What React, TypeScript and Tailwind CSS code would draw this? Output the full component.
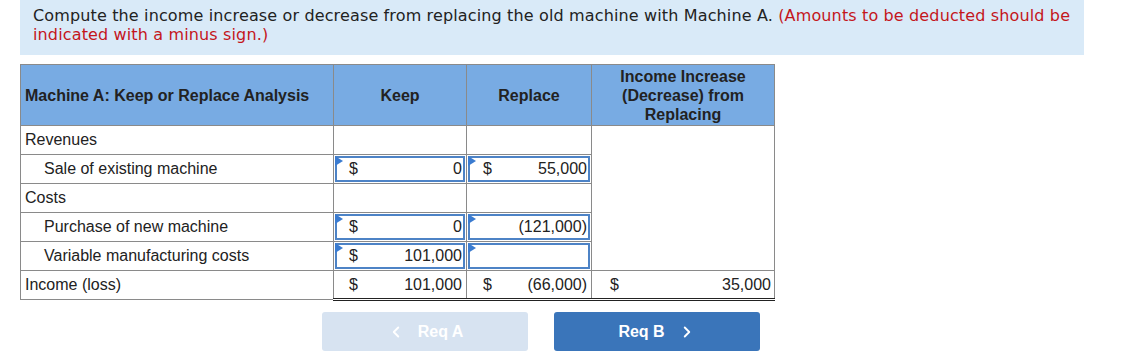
import { ChevronLeft, ChevronRight } from "lucide-react";

type Money = { dollar?: boolean; value?: string; input?: boolean };

const rows: {
  label: string;
  indent?: boolean;
  keep?: Money;
  replace?: Money;
}[] = [
  { label: "Revenues" },
  {
    label: "Sale of existing machine",
    indent: true,
    keep: { dollar: true, value: "0", input: true },
    replace: { dollar: true, value: "55,000", input: true },
  },
  { label: "Costs" },
  {
    label: "Purchase of new machine",
    indent: true,
    keep: { dollar: true, value: "0", input: true },
    replace: { value: "(121,000)", input: true },
  },
  {
    label: "Variable manufacturing costs",
    indent: true,
    keep: { dollar: true, value: "101,000", input: true },
    replace: { value: "", input: true },
  },
];

function Flag() {
  return (
    <span className="absolute left-[1px] top-[1px] h-0 w-0 border-t-[5px] border-b-[5px] border-l-[8px] border-t-transparent border-b-transparent border-l-[#3a7bd0]" />
  );
}

function MoneyCell({ m, pad }: { m?: Money; pad: string }) {
  if (!m) return <td className="border border-[#8a8a8a] p-0" />;
  return (
    <td className="relative border border-[#8a8a8a] p-0">
      {m.input && (
        <div className="pointer-events-none absolute inset-[1px] border-2 border-[#4d83c6]" />
      )}
      {m.input && <Flag />}
      <div className={`flex items-center justify-between pr-[4px] ${pad}`}>
        <span>{m.dollar ? "$" : ""}</span>
        <span>{m.value}</span>
      </div>
    </td>
  );
}

// totals row: double rule under the amount columns
const totalCell = "border border-[#8a8a8a] border-b-[3px] border-b-[#222] border-double p-0";

export default function App() {
  return (
    <div className="h-[359px] w-[1132px] bg-white">
      <div className="ml-[20px] h-[55px] w-[1064px] bg-[#d9eaf8] pl-[13px] pt-[6px] font-['DejaVu_Sans',Verdana,sans-serif] text-[16px] leading-[19px] tracking-[0.14px] text-[#222]">
        Compute the income increase or decrease from replacing the old machine with Machine A.{" "}
        <span className="text-[#c4161c]">(Amounts to be deducted should be indicated with a minus sign.)</span>
      </div>

      <table className="ml-[20px] mt-[9px] w-[754px] table-fixed border-collapse font-['Liberation_Sans',Arial,sans-serif] text-[16px] leading-[18px] text-[#222]">
        <colgroup>
          <col className="w-[313px]" />
          <col className="w-[133px]" />
          <col className="w-[125px]" />
          <col className="w-[183px]" />
        </colgroup>
        <thead>
          <tr className="h-[61px] bg-[#78abe3] font-bold leading-[19px]">
            <th className="border border-[#8a8a8a] pl-[4px] text-left">Machine A: Keep or Replace Analysis</th>
            <th className="border border-[#8a8a8a] text-center">Keep</th>
            <th className="border border-[#8a8a8a] text-center">Replace</th>
            <th className="border border-[#8a8a8a] px-[8px] text-center">
              Income Increase (Decrease) from Replacing
            </th>
          </tr>
        </thead>
        <tbody>
          {rows.map((r, i) => (
            <tr key={r.label} className="h-[29px]">
              <td className={`border border-[#8a8a8a] p-0 ${r.indent ? "pl-[23px]" : "pl-[4px]"}`}>{r.label}</td>
              <MoneyCell m={r.keep} pad="pl-[15px]" />
              <MoneyCell m={r.replace} pad="pl-[16px]" />
              {i === 0 && <td rowSpan={5} className="border border-[#8a8a8a]" />}
            </tr>
          ))}
          <tr className="h-[29px]">
            <td className="border border-[#8a8a8a] p-0 pl-[4px]">Income (loss)</td>
            <td className={totalCell}>
              <div className="flex items-center justify-between pl-[15px] pr-[4px]">
                <span>$</span>
                <span>101,000</span>
              </div>
            </td>
            <td className={totalCell}>
              <div className="flex items-center justify-between pl-[16px] pr-[4px]">
                <span>$</span>
                <span>(66,000)</span>
              </div>
            </td>
            <td className={totalCell}>
              <div className="flex items-center justify-between pl-[18px] pr-[3px]">
                <span>$</span>
                <span>35,000</span>
              </div>
            </td>
          </tr>
        </tbody>
      </table>

      <div className="ml-[322px] mt-[11px] flex gap-[26px] font-['Liberation_Sans',Arial,sans-serif] text-[16px] font-bold text-white">
        <button className="flex h-[39px] w-[206px] items-center justify-center gap-[13px] rounded-[3px] bg-[#d7e3f1]">
          <ChevronLeft className="h-[18px] w-[18px]" strokeWidth={2.5} />
          <span>Req A</span>
        </button>
        <button className="flex h-[39px] w-[206px] items-center justify-center gap-[13px] rounded-[3px] bg-[#3a75ba]">
          <span>Req B</span>
          <ChevronRight className="h-[18px] w-[18px]" strokeWidth={2.5} />
        </button>
      </div>
    </div>
  );
}
